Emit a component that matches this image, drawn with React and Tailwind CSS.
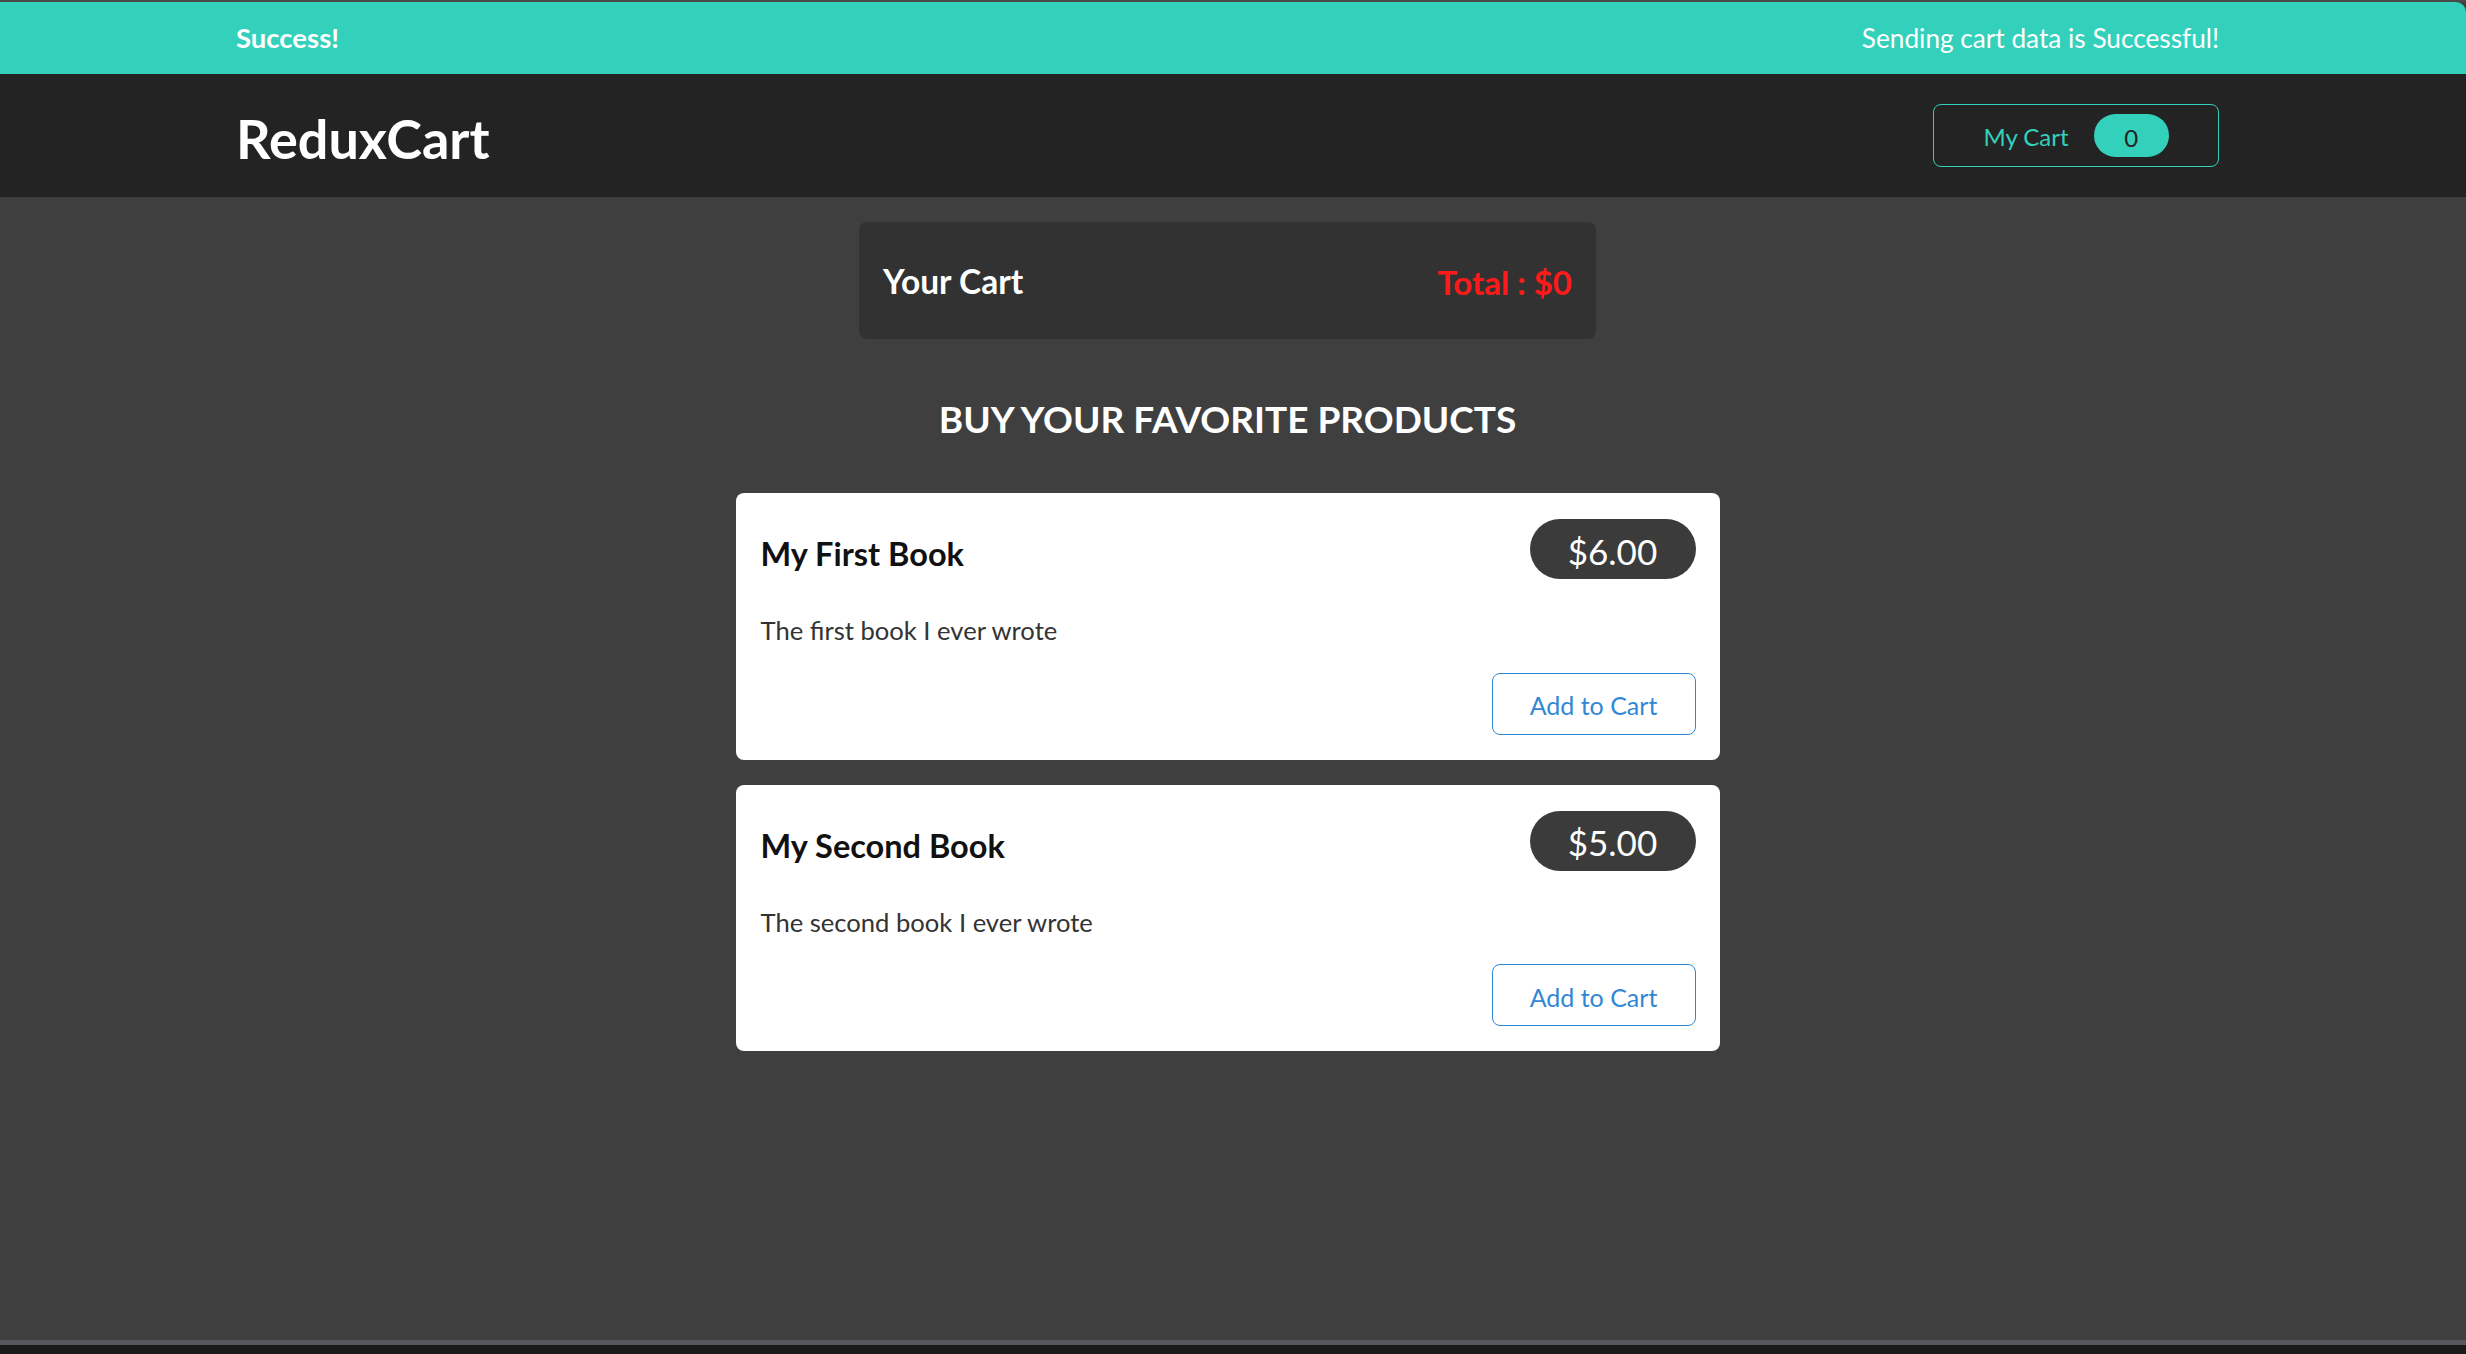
import React from "react";

const products = [
  { id: 1, title: "My First Book", price: 6, description: "The first book I ever wrote" },
  { id: 2, title: "My Second Book", price: 5, description: "The second book I ever wrote" },
];

function ProductCard({ title, price, description }) {
  return (
    <li className="w-[984px] bg-white rounded-[8px] pt-[26px] px-[24px] pb-[25px] flex flex-col">
      <header className="h-[60px] flex items-center justify-between pl-[1px]">
        <h3 className="mt-[11px] text-[32.5px] leading-none font-bold text-[#111111]">{title}</h3>
        <div className="h-[60px] w-[166px] rounded-full bg-[#3b3b3b] flex items-center justify-center pt-[4px] text-white text-[35px] leading-none">
          ${price.toFixed(2)}
        </div>
      </header>
      <p className="mt-[39px] pl-[1px] text-[25.6px] leading-none text-[#333333]">{description}</p>
      <div className="mt-[29px] flex justify-end">
        <button className="w-[204px] h-[62px] rounded-[8px] border-[1.5px] border-[#3088d4] text-[#3088d4] text-[25px] leading-none pt-[4px] bg-white">
          Add to Cart
        </button>
      </div>
    </li>
  );
}

export default function App() {
  return (
    <div className="h-[1354px] bg-[#3f3f3f] flex flex-col font-['Lato',sans-serif] overflow-hidden">
      <div className="h-[2px] bg-[#4a4a4a]" />
      <section className="h-[72px] bg-[#33d1bb] rounded-tr-[10px] flex items-center justify-between pl-[236px] pr-[247px] text-white">
        <h2 className="text-[27.5px] leading-none font-bold">Success!</h2>
        <p className="text-[26.2px] leading-none">Sending cart data is Successful!</p>
      </section>
      <header className="h-[123px] bg-[#232323] flex items-center justify-between pl-[236px] pr-[247px]">
        <h1 className="mt-[6px] text-[54px] leading-none font-bold text-white">ReduxCart</h1>
        <button className="w-[286px] h-[63px] rounded-[8px] border-[1.5px] border-[#33d1bb] flex items-center justify-center gap-[25px]">
          <span className="text-[24px] leading-none text-[#33d1bb] pt-[3px]">My Cart</span>
          <span className="w-[75px] h-[43px] rounded-full bg-[#33d1bb] flex items-center justify-center pt-[4px] text-[24px] leading-none text-[#222222]">
            0
          </span>
        </button>
      </header>
      <main className="flex-1 flex flex-col items-center pr-[11px] pt-[25px]">
        <div className="w-[737px] h-[117px] bg-[#323232] rounded-[8px] flex items-center justify-between px-[24px] pt-[3px]">
          <h2 className="text-[33.5px] leading-none font-bold text-white">Your Cart</h2>
          <span className="text-[33px] leading-none font-bold text-[#ff1a1a]">Total : $0</span>
        </div>
        <h2 className="mt-[61px] mb-[56px] text-[37px] leading-none font-bold text-white">
          BUY YOUR FAVORITE PRODUCTS
        </h2>
        <ul className="flex flex-col gap-[25px]">
          {products.map((p) => (
            <ProductCard key={p.id} {...p} />
          ))}
        </ul>
      </main>
      <div className="h-[5px] bg-[#56575c]" />
      <div className="h-[9px] bg-[#1a1a1a]" />
    </div>
  );
}
